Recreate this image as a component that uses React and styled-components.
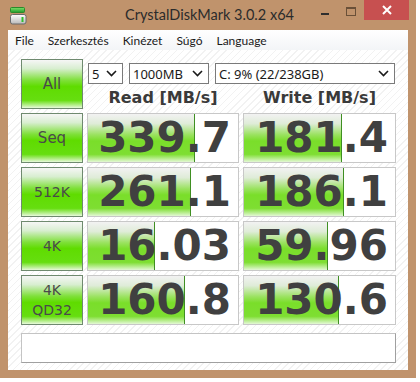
import React from "react";
import styled, { createGlobalStyle } from "styled-components";

const GlobalStyle = createGlobalStyle`
  body {
    margin: 0;
    background: #ffffff;
  }
`;

const rows = [
  { label: ["Seq"], read: "339.7", readBar: 106, write: "181.4", writeBar: 97 },
  { label: ["512K"], read: "261.1", readBar: 102, write: "186.1", writeBar: 99 },
  { label: ["4K"], read: "16.03", readBar: 66, write: "59.96", writeBar: 83 },
  { label: ["4K", "QD32"], read: "160.8", readBar: 96, write: "130.6", writeBar: 94 },
];

const menu = ["File", "Szerkesztés", "Kinézet", "Súgó", "Language"];

const App = () => {
  return (
    <>
      <GlobalStyle />
      <Window>
        <TitleBar>
          <AppIcon width="17" height="18" viewBox="0 0 17 18">
            <defs>
              <linearGradient id="bar" x1="0" y1="0" x2="0" y2="1">
                <stop offset="0" stopColor="#7fe06a" />
                <stop offset="1" stopColor="#1f9a2a" />
              </linearGradient>
              <linearGradient id="body" x1="0" y1="0" x2="0" y2="1">
                <stop offset="0" stopColor="#ffffff" />
                <stop offset="1" stopColor="#b8b8b8" />
              </linearGradient>
            </defs>
            <rect x="0.5" y="0.5" width="14" height="5" rx="1" fill="url(#bar)" stroke="#2a8a2a" />
            <rect x="0.5" y="7.5" width="15.5" height="9.5" rx="2" fill="url(#body)" stroke="#6a6a6a" />
            <rect x="11.5" y="10" width="2" height="5" fill="#2fc02f" />
          </AppIcon>
          <Title>CrystalDiskMark 3.0.2 x64</Title>
          <Controls>
            <ControlButton>
              <MinimizeGlyph />
            </ControlButton>
            <ControlButton>
              <MaximizeGlyph />
            </ControlButton>
            <CloseButton>
              <svg width="10" height="10" viewBox="0 0 10 10">
                <path d="M1 1 L9 9 M9 1 L1 9" stroke="#fff" strokeWidth="2" />
              </svg>
            </CloseButton>
          </Controls>
        </TitleBar>
        <MenuBar>
          {menu.map((m) => (
            <MenuItem key={m}>{m}</MenuItem>
          ))}
        </MenuBar>
        <Client>
          <Board>
            <RowButton>
              <Label $big>All</Label>
            </RowButton>
            <TopPanel>
              <ComboRow>
                <Combo $width={35}>
                  <span>5</span>
                  <Chevron />
                </Combo>
                <Combo $width={80}>
                  <span>1000MB</span>
                  <Chevron />
                </Combo>
                <Combo $width={180}>
                  <span>C: 9% (22/238GB)</span>
                  <Chevron />
                </Combo>
              </ComboRow>
              <Headers>
                <Header>Read [MB/s]</Header>
                <Header>Write [MB/s]</Header>
              </Headers>
            </TopPanel>
            {rows.map((r) => (
              <React.Fragment key={r.label.join(" ")}>
                <RowButton>
                  {r.label.map((l) => (
                    <Label key={l} $big={l === "Seq"}>
                      {l}
                    </Label>
                  ))}
                </RowButton>
                <Cell>
                  <Bar style={{ width: r.readBar }} />
                  <Value>{r.read}</Value>
                </Cell>
                <Cell>
                  <Bar style={{ width: r.writeBar }} />
                  <Value>{r.write}</Value>
                </Cell>
              </React.Fragment>
            ))}
          </Board>
          <Comment />
        </Client>
      </Window>
    </>
  );
};

const Chevron = () => (
  <svg width="11" height="7" viewBox="0 0 11 7">
    <path d="M1 1 L5.5 5.5 L10 1" fill="none" stroke="#1a1a1a" strokeWidth="1.6" />
  </svg>
);

const Window = styled.div`
  width: 416px;
  height: 378px;
  box-sizing: border-box;
  background: #c0936c;
  padding: 0 8px 8px 8px;
  display: flex;
  flex-direction: column;
`;

const TitleBar = styled.div`
  height: 30px;
  display: grid;
  grid-template-columns: 1fr auto 1fr;
  align-items: start;
  margin-right: -1px;
`;

const AppIcon = styled.svg`
  margin: 7px 0 0 2px;
`;

const Title = styled.div`
  font-family: Lato, "Noto Sans", sans-serif;
  font-size: 14.5px;
  color: #2b2b2b;
  line-height: 30px;
  margin-left: 2px;
`;

const Controls = styled.div`
  display: flex;
  justify-content: flex-end;
  align-items: flex-start;
`;

const ControlButton = styled.div`
  width: 26px;
  height: 20px;
  display: flex;
  align-items: center;
  justify-content: center;
`;

const MinimizeGlyph = styled.div`
  width: 8px;
  height: 2px;
  background: #2e2e2e;
  margin-top: 7px;
`;

const MaximizeGlyph = styled.div`
  width: 8px;
  height: 6px;
  border: 1px solid #6a5038;
  border-top-width: 2px;
  margin-top: 2px;
`;

const CloseButton = styled.div`
  width: 45px;
  height: 20px;
  background: #c75050;
  display: flex;
  align-items: center;
  justify-content: center;
`;

const MenuBar = styled.div`
  height: 20px;
  display: flex;
  align-items: center;
  background: linear-gradient(#ffffff, #f3f5f7);
`;

const MenuItem = styled.div`
  padding: 0 7px;
  font-family: Lato, "Noto Sans", sans-serif;
  font-size: 12px;
  color: #1a1a1a;
`;

const Client = styled.div`
  flex: 1;
  padding: 9px 13px 7px 13px;
  background: repeating-linear-gradient(-45deg, #ffffff 0 4px, #f2f2f2 4px 5px);
  display: flex;
  flex-direction: column;
  gap: 8px;
`;

const Board = styled.div`
  display: grid;
  grid-template-columns: 62px 152px 153px;
  grid-template-rows: repeat(5, 50px);
  gap: 4px;
`;

const RowButton = styled.div`
  box-sizing: border-box;
  border: 1px solid #6f8a6f;
  background: linear-gradient(
    #f6f6f6 0%,
    #d8eed0 18%,
    #7fe03a 42%,
    #5fdc00 55%,
    #66de10 84%,
    #c6f2a6 96%,
    #e8fadc 100%
  );
  display: flex;
  flex-direction: column;
  align-items: center;
  justify-content: center;
`;

const Label = styled.span`
  display: block;
  font-family: "DejaVu Sans", sans-serif;
  font-size: ${(p) => (p.$big ? "15px" : "14px")};
  line-height: 20px;
  color: #4a4a4a;
`;

const TopPanel = styled.div`
  grid-column: 2 / 4;
  display: flex;
  flex-direction: column;
`;

const ComboRow = styled.div`
  display: flex;
  gap: 6px;
  margin: 4px 0 0 1px;
`;

const Combo = styled.div`
  width: ${(p) => p.$width}px;
  height: 21px;
  box-sizing: border-box;
  border: 1px solid #7a7a7a;
  background: #ffffff;
  display: flex;
  align-items: center;
  justify-content: space-between;
  padding: 0 5px 0 3px;
  font-family: "Noto Sans", sans-serif;
  font-size: 13px;
  color: #1a1a1a;
`;

const Headers = styled.div`
  display: grid;
  grid-template-columns: 152px 153px;
  gap: 4px;
  margin-top: 4px;
`;

const Header = styled.div`
  text-align: center;
  font-family: "DejaVu Sans", sans-serif;
  font-weight: bold;
  font-size: 16px;
  line-height: 20px;
  color: #3a3a3a;
`;

const Cell = styled.div`
  position: relative;
  box-sizing: border-box;
  border: 1px solid #c8c8c8;
  background: #ffffff;
  overflow: hidden;
`;

const Bar = styled.div`
  position: absolute;
  left: 0;
  top: 0;
  bottom: 0;
  border-right: 1px solid #3f8f22;
  background: linear-gradient(
    #f2f2f2 0%,
    #dfecd8 20%,
    #98e25c 44%,
    #7ade2a 56%,
    #7ede32 84%,
    #c4f0a2 95%,
    #e4f8d6 100%
  );
`;

const Value = styled.div`
  position: relative;
  text-align: right;
  padding-right: 7px;
  font-family: "DejaVu Sans", sans-serif;
  font-weight: bold;
  font-size: 42px;
  line-height: 48px;
  color: #404040;
`;

const Comment = styled.div`
  width: 375px;
  height: 30px;
  box-sizing: border-box;
  border: 1px solid #c4c4c4;
  border-right-color: #a0a0a0;
  border-bottom-color: #a0a0a0;
  background: #ffffff;
`;

export default App;
